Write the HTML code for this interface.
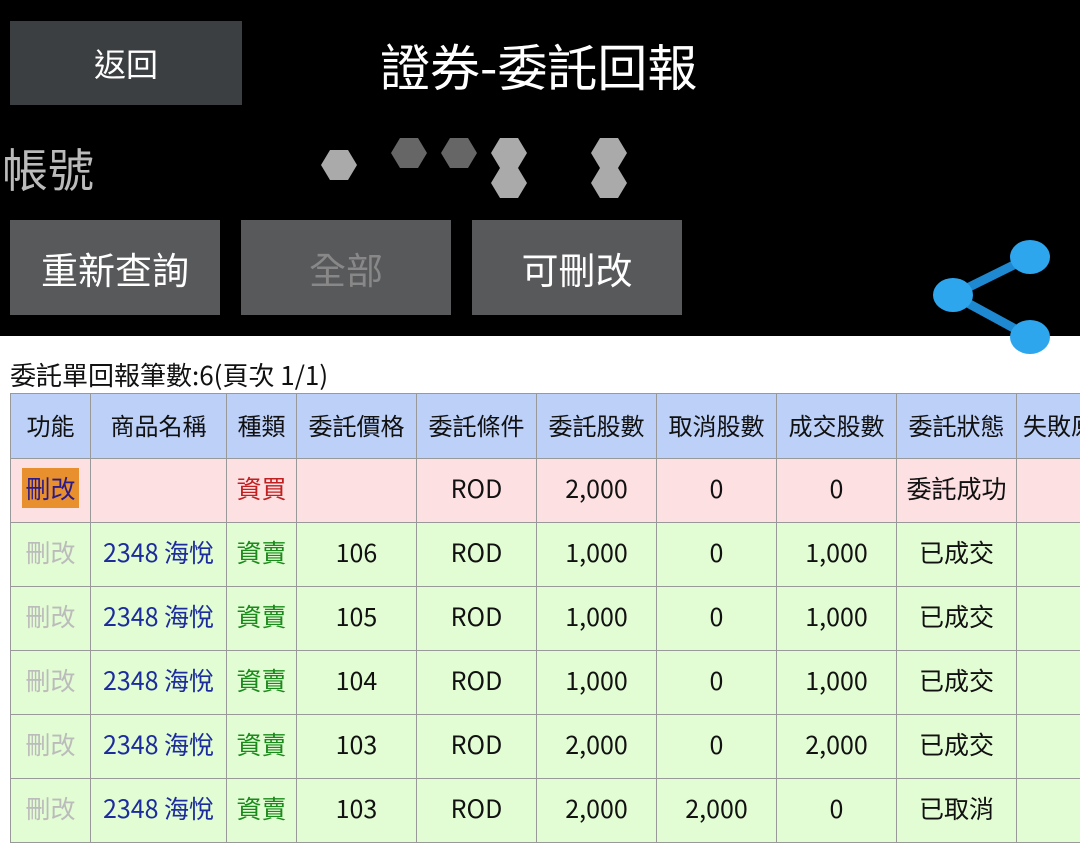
<!DOCTYPE html><html><head><meta charset="utf-8"><style>
*{margin:0;padding:0;box-sizing:border-box}
body{width:1080px;height:866px;background:#fff;position:relative;overflow:hidden;font-family:"Noto Sans CJK TC","Liberation Sans",sans-serif}
.top{position:absolute;left:0;top:0;width:1080px;height:336px;background:#000}
.btn{position:absolute;background:#58595b;color:#fff;font-size:37px;display:flex;align-items:center;justify-content:center}
.t{position:absolute;color:#fff;line-height:1}
table{position:absolute;left:10px;top:393px;border-collapse:collapse;table-layout:fixed;width:1126px}
td{border:1px solid #999;text-align:center;font-size:25px;height:64px;white-space:nowrap;overflow:hidden;color:#111;line-height:1;padding-bottom:4px}
tr.h td{background:#bcd0f8;height:65px;font-size:24px;padding-bottom:2px}
tr.p td{background:#fde0e2}
tr.g td{background:#e2fcd4}
.gr{color:#bbb}.bl{color:#1c2c9c}.gn{color:#1a8a1a}.rd{color:#c02020}
</style></head><body>
<div class="top"></div>
<div class="btn" style="left:10px;top:21px;width:232px;height:84px;background:#3c3f42;font-size:32px">返回</div>
<div class="t" style="left:380px;top:40px;font-size:50px">證券-委託回報</div>
<div class="t" style="left:2px;top:145px;font-size:46px;color:#bbb">帳號</div>
<svg style="position:absolute;left:100px;top:130px" width="560" height="90"><g fill="#666"><polygon points="300,8 318,8 327,23 318,38 300,38 291,23"/><polygon points="350,8 368,8 377,23 368,38 350,38 341,23"/></g><g fill="#aaa"><polygon points="230,20 248,20 257,35 248,50 230,50 221,35"/><polygon points="400,8 418,8 427,23 418,38 400,38 391,23"/><polygon points="500,8 518,8 527,23 518,38 500,38 491,23"/><polygon points="400,38 418,38 427,53 418,68 400,68 391,53"/><polygon points="500,38 518,38 527,53 518,68 500,68 491,53"/></g></svg>
<div class="btn" style="left:10px;top:220px;width:210px;height:95px">重新查詢</div>
<div class="btn" style="left:241px;top:220px;width:210px;height:95px;color:#888">全部</div>
<div class="btn" style="left:472px;top:220px;width:210px;height:95px">可刪改</div>
<svg style="position:absolute;left:925px;top:235px" width="140" height="130"><g stroke="#1e88d0" stroke-width="9"><line x1="28" y1="60" x2="105" y2="22"/><line x1="28" y1="60" x2="105" y2="102"/></g><g fill="#2ea6ee"><ellipse cx="28" cy="60" rx="20" ry="17"/><ellipse cx="105" cy="22" rx="20" ry="17"/><ellipse cx="105" cy="102" rx="20" ry="17"/></g></svg>
<div style="position:absolute;left:10px;top:359px;font-size:26px;color:#111;line-height:1.2">委託單回報筆數:6(頁次 1/1)</div>
<table><colgroup><col width="80"><col width="136"><col width="70"><col width="120"><col width="120"><col width="120"><col width="120"><col width="120"><col width="120"><col width="120"></colgroup>
<tr class="h"><td>功能</td><td>商品名稱</td><td>種類</td><td>委託價格</td><td>委託條件</td><td>委託股數</td><td>取消股數</td><td>成交股數</td><td>委託狀態</td><td style="text-align:left;padding-left:6px">失敗原因</td></tr>
<tr class="p"><td><span style="background:#e8902e;color:#2a1a8a;padding:2px 3px">刪改</span></td><td></td><td class="rd">資買</td><td></td><td>ROD</td><td>2,000</td><td>0</td><td>0</td><td>委託成功</td><td></td></tr>
<tr class="g"><td class="gr">刪改</td><td class="bl">2348 海悅</td><td class="gn">資賣</td><td>106</td><td>ROD</td><td>1,000</td><td>0</td><td>1,000</td><td>已成交</td><td></td></tr>
<tr class="g"><td class="gr">刪改</td><td class="bl">2348 海悅</td><td class="gn">資賣</td><td>105</td><td>ROD</td><td>1,000</td><td>0</td><td>1,000</td><td>已成交</td><td></td></tr>
<tr class="g"><td class="gr">刪改</td><td class="bl">2348 海悅</td><td class="gn">資賣</td><td>104</td><td>ROD</td><td>1,000</td><td>0</td><td>1,000</td><td>已成交</td><td></td></tr>
<tr class="g"><td class="gr">刪改</td><td class="bl">2348 海悅</td><td class="gn">資賣</td><td>103</td><td>ROD</td><td>2,000</td><td>0</td><td>2,000</td><td>已成交</td><td></td></tr>
<tr class="g"><td class="gr">刪改</td><td class="bl">2348 海悅</td><td class="gn">資賣</td><td>103</td><td>ROD</td><td>2,000</td><td>2,000</td><td>0</td><td>已取消</td><td></td></tr>
</table>
</body></html>
